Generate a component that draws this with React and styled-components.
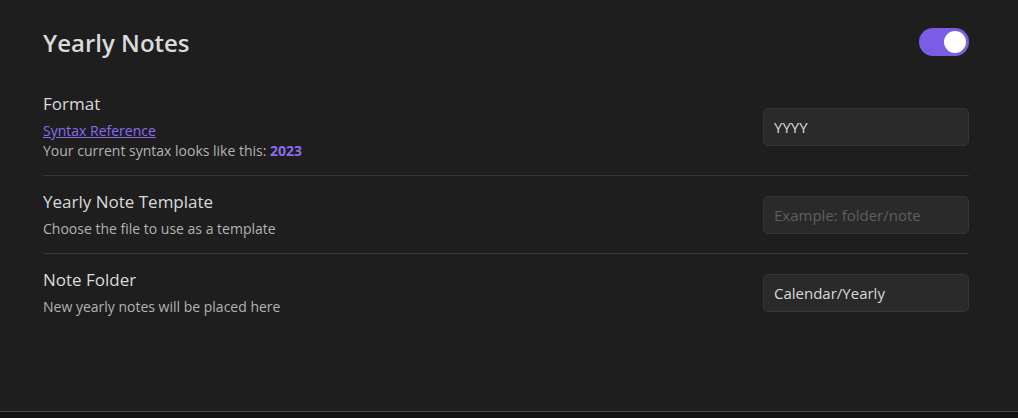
import React, { useState } from 'react';
import styled, { createGlobalStyle } from 'styled-components';

const GlobalStyle = createGlobalStyle`
  html, body {
    margin: 0;
    padding: 0;
    background: #121212;
  }
  body {
    font-family: "Open Sans", "Noto Sans", sans-serif;
    color: #dadada;
  }
`;

const Page = styled.div`
  height: 412px;
  background: #1e1e1e;
  border-bottom: 1px solid #4a4a4a;
  padding: 0 49px 0 43px;
  box-sizing: border-box;
`;

const Heading = styled.div`
  display: flex;
  align-items: center;
  justify-content: space-between;
  height: 72px;
  padding-top: 6px;
`;

const Title = styled.h2`
  margin: 0;
  font-size: 24px;
  font-weight: 600;
  color: #dadada;
`;

const Toggle = styled.button`
  width: 50px;
  height: 28px;
  border: none;
  border-radius: 14px;
  padding: 0 3px;
  background: ${(p) => (p.$on ? '#7b5ce5' : '#3f3f3f')};
  display: flex;
  align-items: center;
  justify-content: ${(p) => (p.$on ? 'flex-end' : 'flex-start')};
  cursor: pointer;
`;

const Knob = styled.span`
  width: 22px;
  height: 22px;
  border-radius: 50%;
  background: #ffffff;
`;

const Item = styled.div`
  display: flex;
  align-items: center;
  justify-content: space-between;
  padding: 14px 0;
  border-top: ${(p) => (p.$first ? 'none' : '1px solid #363636')};
  min-height: 45px;
`;

const Info = styled.div`
  display: flex;
  flex-direction: column;
`;

const Name = styled.div`
  font-size: 17px;
  line-height: 24px;
  color: #dadada;
  margin-bottom: 5px;
`;

const Desc = styled.div`
  font-size: 14px;
  line-height: 20px;
  color: #b3b3b3;
`;

const Link = styled.a`
  color: #8a6cf0;
  text-decoration: underline;
  font-size: 14px;
  line-height: 20px;
`;

const Accent = styled.b`
  color: #8a6cf0;
  font-weight: 700;
`;

const Input = styled.input`
  width: 206px;
  height: 38px;
  box-sizing: border-box;
  background: #2a2a2a;
  border: 1px solid #363636;
  border-radius: 5px;
  padding: 0 10px;
  font-family: "Open Sans", "Noto Sans", sans-serif;
  font-size: 15px;
  color: #dadada;
  outline: none;
  &::placeholder {
    color: #5f5f5f;
  }
`;

export default function App() {
  const [on, setOn] = useState(true);
  return (
    <>
      <GlobalStyle />
      <Page>
        <Heading>
          <Title>Yearly Notes</Title>
          <Toggle $on={on} onClick={() => setOn(!on)}>
            <Knob />
          </Toggle>
        </Heading>
        <Item $first>
          <Info>
            <Name>Format</Name>
            <Link href="#">Syntax Reference</Link>
            <Desc>
              Your current syntax looks like this: <Accent>2023</Accent>
            </Desc>
          </Info>
          <Input defaultValue="YYYY" />
        </Item>
        <Item>
          <Info>
            <Name>Yearly Note Template</Name>
            <Desc>Choose the file to use as a template</Desc>
          </Info>
          <Input placeholder="Example: folder/note" />
        </Item>
        <Item>
          <Info>
            <Name>Note Folder</Name>
            <Desc>New yearly notes will be placed here</Desc>
          </Info>
          <Input defaultValue="Calendar/Yearly" />
        </Item>
      </Page>
    </>
  );
}
